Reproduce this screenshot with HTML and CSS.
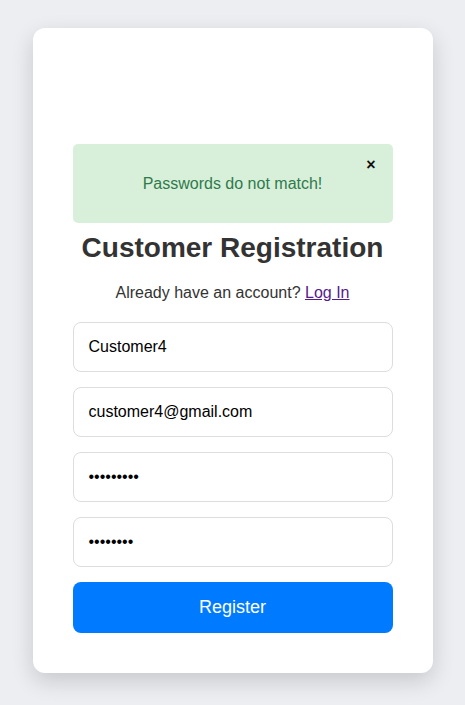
FILE: index.html
```html
<!DOCTYPE html>
<html lang="en">
<head>
<meta charset="utf-8">
<title>Customer Registration</title>
<link rel="stylesheet" href="styles.css">
</head>
<body>
<main class="card">
  <div class="alert">
    <span class="alert-text">Passwords do not match!</span>
    <button class="alert-close" type="button" aria-label="Close">&times;</button>
  </div>
  <h2 class="title">Customer Registration</h2>
  <p class="subtitle">Already have an account? <a href="#" class="link">Log In</a></p>
  <form class="form">
    <input class="field" type="text" value="Customer4">
    <input class="field" type="email" value="customer4@gmail.com">
    <input class="field" type="password" value="123456789">
    <input class="field" type="password" value="12345678">
    <button class="btn" type="button">Register</button>
  </form>
</main>
</body>
</html>
```
FILE: styles.css
```css
* { box-sizing: border-box; }
html, body { margin: 0; padding: 0; }
body {
  background: #eceef2;
  font-family: "Liberation Sans", Arial, sans-serif;
  color: #333;
  min-height: 705px;
  display: flex;
  justify-content: center;
  align-items: flex-start;
  padding-top: 28px;
}
.card {
  width: 400px;
  background: #fff;
  border-radius: 12px;
  box-shadow: 0 8px 22px rgba(0, 0, 0, 0.16);
  padding: 116px 40px 40px;
}
.alert {
  position: relative;
  background: #d8f0da;
  color: #2f7a4c;
  border-radius: 5px;
  height: 79px;
  display: flex;
  align-items: center;
  justify-content: center;
  font-size: 16px;
}
.alert-close {
  position: absolute;
  top: 13px;
  right: 17px;
  background: none;
  border: 0;
  padding: 0;
  font-family: "Liberation Sans", Arial, sans-serif;
  font-size: 16px;
  font-weight: bold;
  color: #111;
  line-height: 1;
  cursor: pointer;
}
.title {
  margin: 9px 0 0;
  text-align: center;
  font-size: 28px;
  line-height: 32px;
  font-weight: bold;
  color: #333;
}
.subtitle {
  margin: 19px 0 0;
  text-align: center;
  font-size: 16px;
  line-height: 19px;
  color: #333;
}
.link { color: #551a8b; text-decoration: underline; }
.form {
  margin-top: 20px;
  display: flex;
  flex-direction: column;
  gap: 15px;
}
.field {
  display: block;
  width: 100%;
  height: 50px;
  border: 1px solid #ddd;
  border-radius: 8px;
  padding: 0 15px;
  font-family: "Liberation Sans", Arial, sans-serif;
  font-size: 16px;
  color: #000;
  background: #fff;
  outline: none;
}
.btn {
  display: block;
  width: 100%;
  height: 51px;
  border: 0;
  border-radius: 8px;
  background: #007bff;
  color: #fff;
  font-family: "Liberation Sans", Arial, sans-serif;
  font-size: 18px;
  cursor: pointer;
}
```
